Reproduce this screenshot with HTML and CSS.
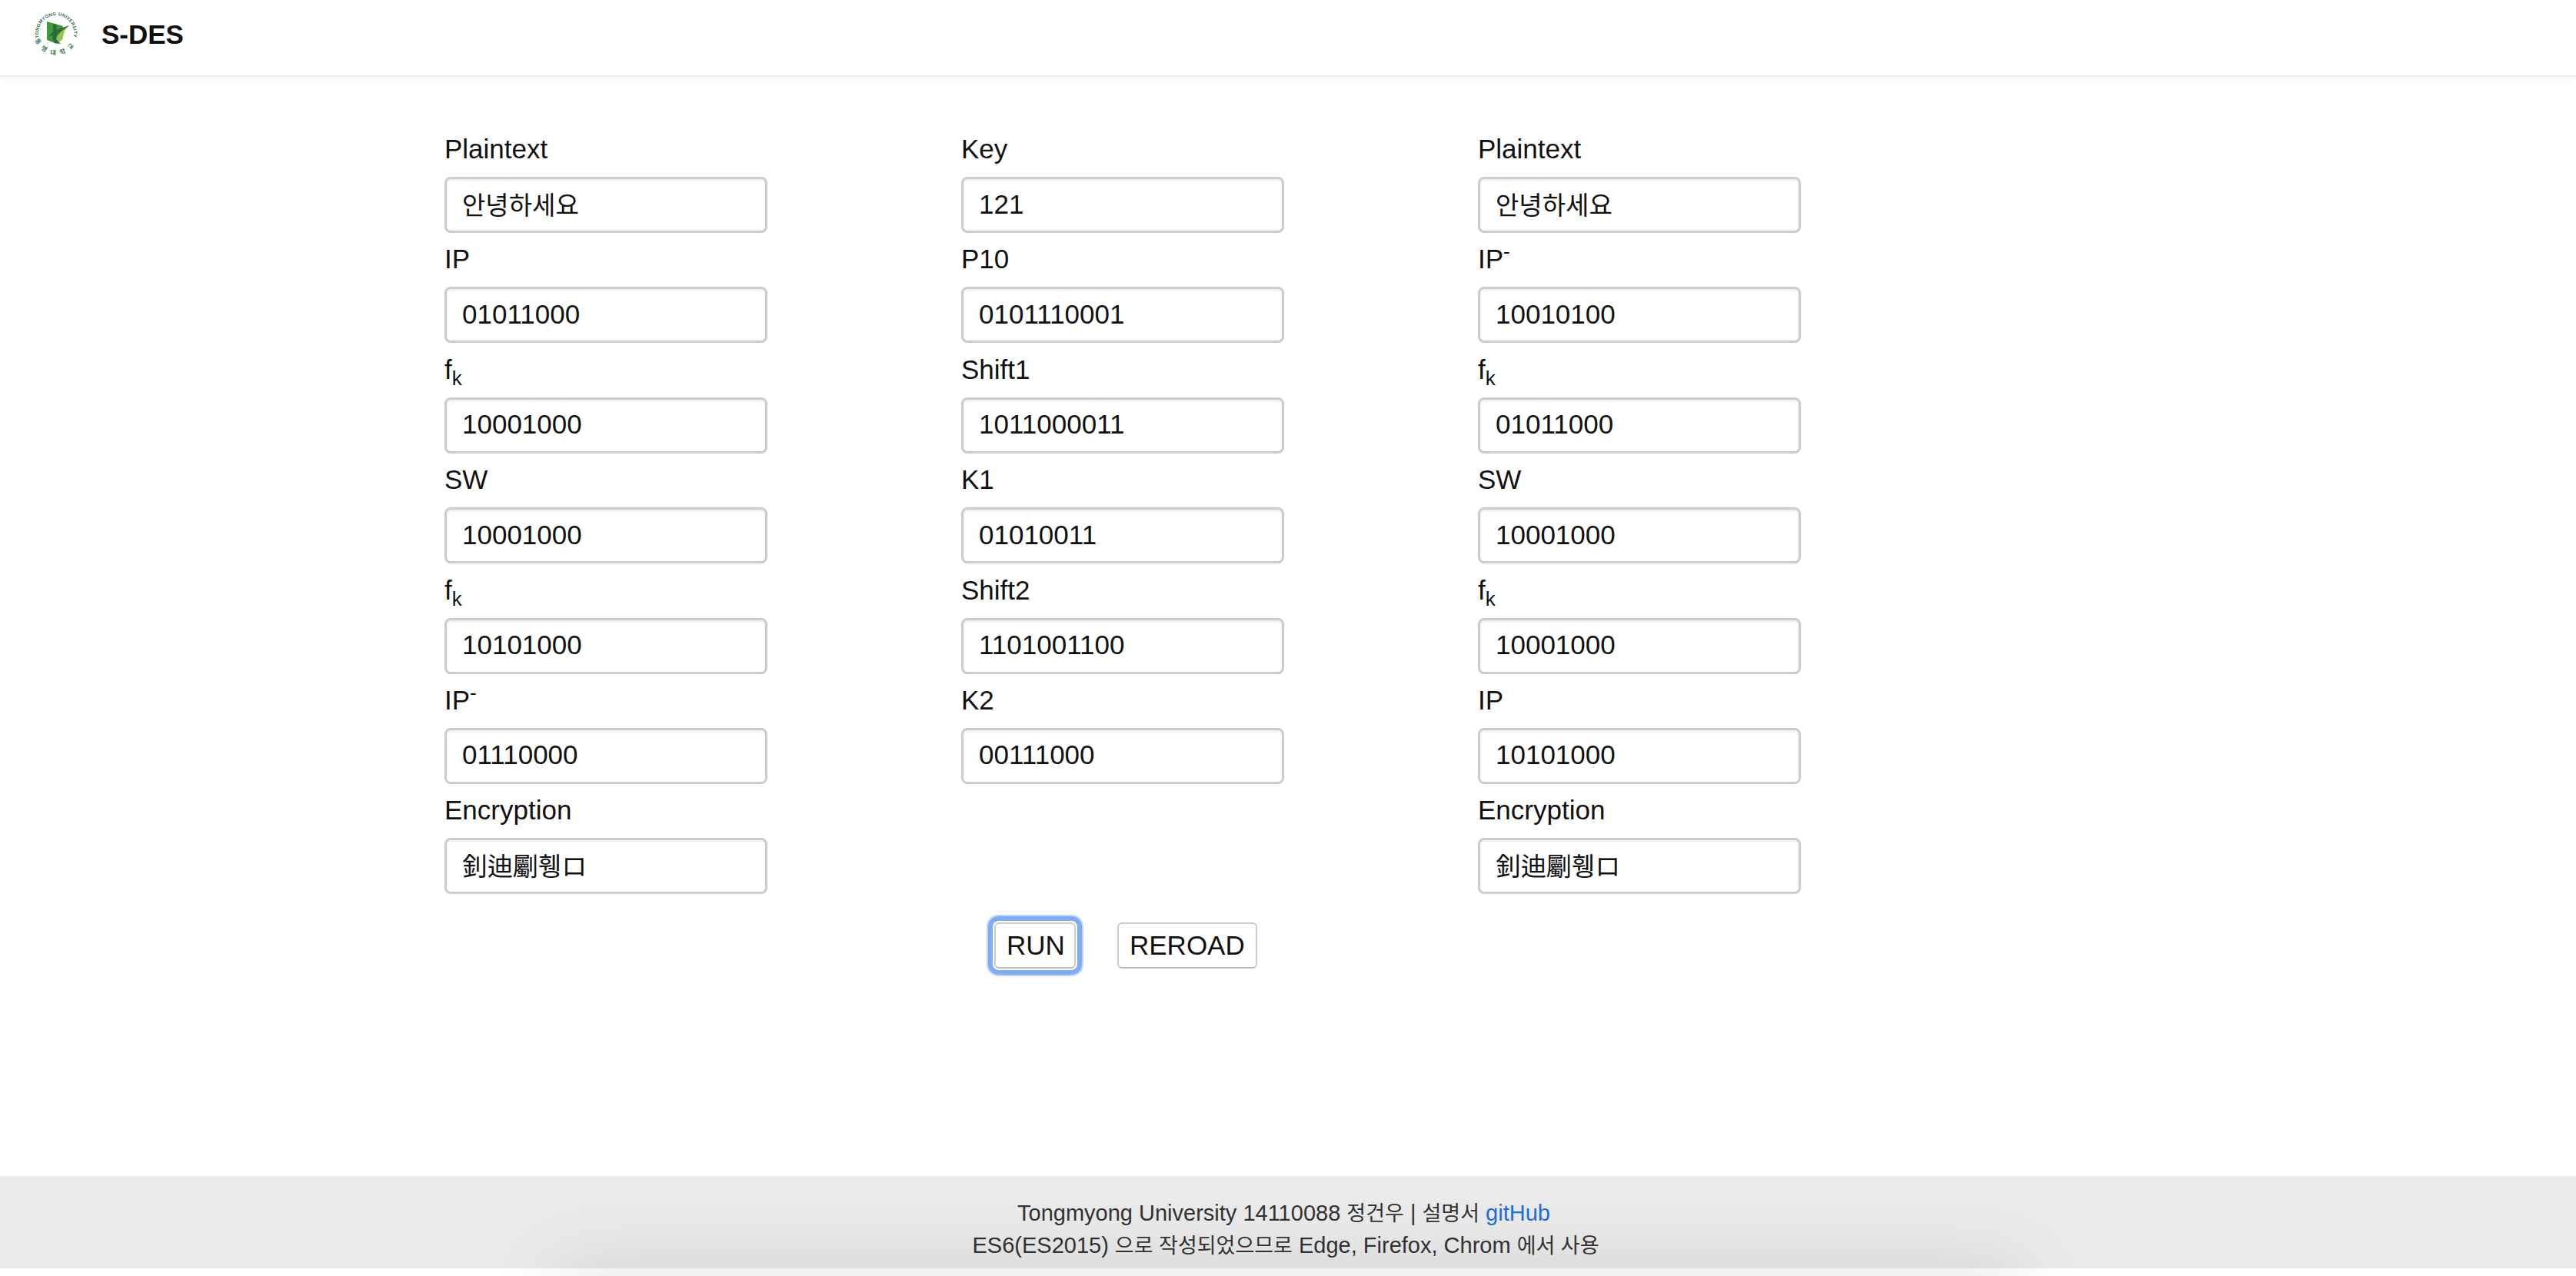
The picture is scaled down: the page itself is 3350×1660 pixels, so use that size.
FILE: index.html
```html
<!DOCTYPE html>
<html lang="ko">
<head>
<meta charset="utf-8">
<title>S-DES</title>
<link rel="stylesheet" href="styles.css">
</head>
<body>
<header class="topbar">
  <svg class="logo" viewBox="0 0 64 64" aria-hidden="true">
    <defs>
      <path id="arc-top" d="M9.8 37 A23 23 0 1 1 54.2 37"/>
      <path id="arc-bot" d="M5 40 A28.5 28.5 0 0 0 59 40"/>
    </defs>
    <g transform="translate(2 2)">
      <path d="M18 14 L39 20 L37 32 L31 43 L18 38 Z" fill="#3f9a3c"/>
      <path d="M39 24 L47 19 L41 26 L38 38 L29 43 L31 34 Z" fill="#9dc24b"/>
      <path d="M26 17 L31 18 L30 25 L47 19 L31 31 L30 37 L36 43 L28 42 L25 36 L26 32 L20 34 L26 27 Z" fill="#2b6a3c"/>
    </g>
    <text class="logo-en"><textPath href="#arc-top">TONGMYONG UNIVERSITY</textPath></text>
    <text class="logo-ko"><textPath href="#arc-bot">동명대학교</textPath></text>
  </svg>
  <h1 class="title">S-DES</h1>
</header>

<main class="content">
  <div class="columns">
    <section class="col">
      <label class="field"><span class="lbl">Plaintext</span><input class="box box-ko" value="안녕하세요"></label>
      <label class="field"><span class="lbl">IP</span><input class="box" value="01011000"></label>
      <label class="field"><span class="lbl">f<sub>k</sub></span><input class="box" value="10001000"></label>
      <label class="field"><span class="lbl">SW</span><input class="box" value="10001000"></label>
      <label class="field"><span class="lbl">f<sub>k</sub></span><input class="box" value="10101000"></label>
      <label class="field"><span class="lbl">IP<sup>-</sup></span><input class="box" value="01110000"></label>
      <label class="field"><span class="lbl">Encryption</span><input class="box box-ko" value="釗迪劚휑ロ"></label>
    </section>
    <section class="col">
      <label class="field"><span class="lbl">Key</span><input class="box" value="121"></label>
      <label class="field"><span class="lbl">P10</span><input class="box" value="0101110001"></label>
      <label class="field"><span class="lbl">Shift1</span><input class="box" value="1011000011"></label>
      <label class="field"><span class="lbl">K1</span><input class="box" value="01010011"></label>
      <label class="field"><span class="lbl">Shift2</span><input class="box" value="1101001100"></label>
      <label class="field"><span class="lbl">K2</span><input class="box" value="00111000"></label>
    </section>
    <section class="col">
      <label class="field"><span class="lbl">Plaintext</span><input class="box box-ko" value="안녕하세요"></label>
      <label class="field"><span class="lbl">IP<sup>-</sup></span><input class="box" value="10010100"></label>
      <label class="field"><span class="lbl">f<sub>k</sub></span><input class="box" value="01011000"></label>
      <label class="field"><span class="lbl">SW</span><input class="box" value="10001000"></label>
      <label class="field"><span class="lbl">f<sub>k</sub></span><input class="box" value="10001000"></label>
      <label class="field"><span class="lbl">IP</span><input class="box" value="10101000"></label>
      <label class="field"><span class="lbl">Encryption</span><input class="box box-ko" value="釗迪劚휑ロ"></label>
    </section>
  </div>
  <div class="actions">
    <button class="btn btn-focus" type="button">RUN</button>
    <button class="btn" type="button">REROAD</button>
  </div>
</main>

<footer class="foot">
  <p class="foot-line foot-first">Tongmyong University 14110088 <span class="ko">정건우</span> | <span class="ko">설명서</span> <a class="foot-link" href="#">gitHub</a></p>
  <p class="foot-line">ES6(ES2015) <span class="ko">으로 작성되었으므로</span> Edge, Firefox, Chrom <span class="ko">에서 사용</span></p>
</footer>
<div class="edge-shadow"></div>
</body>
</html>
```
FILE: styles.css
```css
html, body { margin: 0; padding: 0; }
body {
  position: relative;
  width: 3350px;
  height: 1660px;
  overflow: hidden;
  background: #fff;
  color: #111;
  font-family: "Liberation Sans", "Noto Sans CJK KR", Arial, sans-serif;
  font-size: 35px;
  display: flex;
  flex-direction: column;
}
.topbar {
  height: 100px;
  flex: none;
  box-sizing: border-box;
  display: flex;
  align-items: center;
  padding: 0 0 10px 41px;
  border-bottom: 2px solid #eee;
  box-shadow: 0 4px 8px rgba(0,0,0,.03);
}
.logo { width: 64px; height: 64px; flex: none; }
.logo-en { font-size: 6px; font-weight: 700; letter-spacing: .3px; fill: #35694a; font-family: "Liberation Sans", sans-serif; }
.logo-ko { font-size: 8px; font-weight: 700; letter-spacing: 6.5px; fill: #2f7a4a; font-family: "Noto Sans CJK KR", sans-serif; }
.title { margin: 0 0 0 27px; font-size: 35px; font-weight: 700; line-height: 1; }
.content { flex: 1; padding-top: 70px; }
.columns {
  display: grid;
  grid-template-columns: repeat(3, 420px);
  column-gap: 252px;
  margin-left: 578px;
}
.col { display: flex; flex-direction: column; }
.field { display: block; height: 143.4px; }
.lbl { display: block; height: 60px; line-height: 48px; white-space: nowrap; }
.lbl sub, .lbl sup { font-size: 26px; line-height: 0; }
.box {
  display: block;
  box-sizing: border-box;
  width: 420px;
  height: 73px;
  padding: 0 20px 2px;
  border: 3px solid #ccc;
  border-radius: 8px;
  box-shadow: inset 0 2px 3px rgba(0,0,0,.08);
  background: #fff;
  color: #111;
  font: inherit;
  outline: none;
}
.box-ko { font-size: 33px; padding-bottom: 4px; }
.actions {
  display: flex;
  gap: 54px;
  margin-left: 1293px;
  margin-top: 26px;
}
.btn {
  box-sizing: border-box;
  height: 60px;
  padding: 0 14px;
  border: 2px solid #ccc;
  border-bottom-color: #bbb;
  border-radius: 6px;
  background: #fff;
  color: #111;
  font: inherit;
}
.btn-focus {
  width: 106px;
  box-shadow: 0 0 0 2px #fff, 0 0 0 8px #7facf5, 0 0 0 10px #c0d6fa;
}
.foot {
  flex: none;
  height: 120px;
  margin-bottom: 10px;
  box-sizing: border-box;
  padding: 28px 6px 0 0;
  background: #eaeaea;
  text-align: center;
  color: #333;
  font-size: 29px;
  line-height: 41px;
}
.foot-line { margin: 0; }
.foot-first { padding-right: 5px; }
.ko { font-size: 27px; }
.foot-link { color: #1c6fd8; text-decoration: none; }
.edge-shadow {
  position: absolute;
  left: 725px;
  right: 725px;
  top: 1660px;
  height: 60px;
  box-shadow: 0 0 100px rgba(0,0,0,.15);
  pointer-events: none;
}
```
